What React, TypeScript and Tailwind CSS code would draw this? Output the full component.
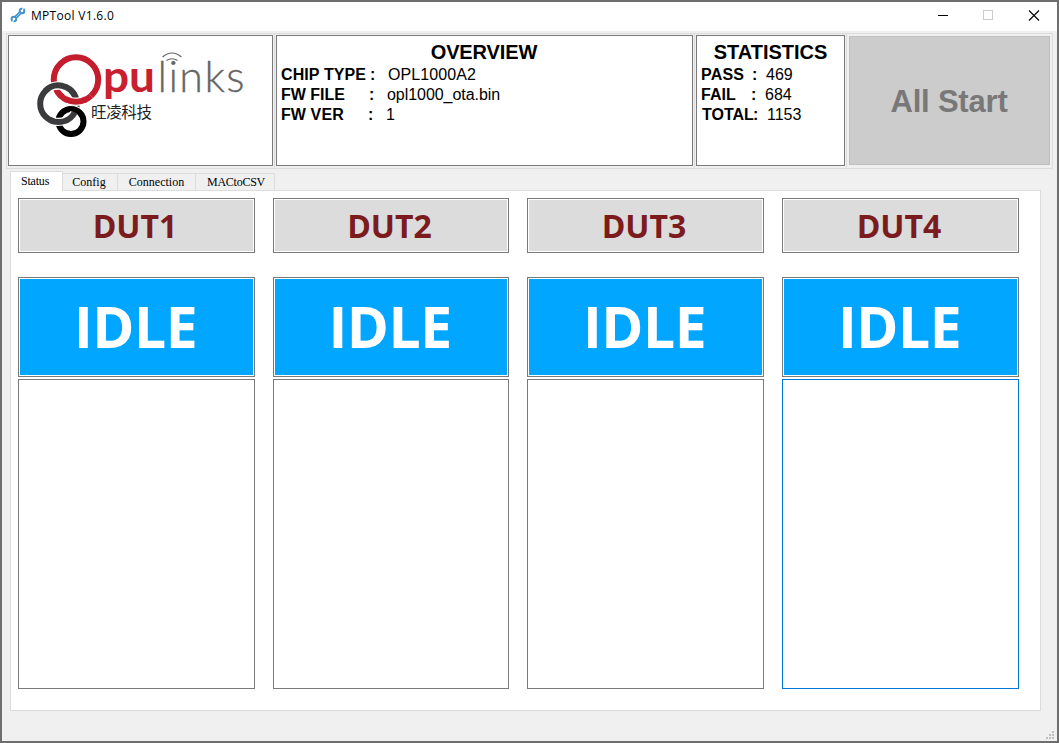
import React from "react";

type Row = { label: string; colon: string; value: string; labelClass: string; colonClass: string; valueClass: string };

const overview: Row[] = [
  { label: "CHIP TYPE", colon: ":", value: "OPL1000A2", labelClass: "w-[89px] tracking-[0.1px]", colonClass: "w-[18px]", valueClass: "tracking-[0.1px]" },
  { label: "FW FILE", colon: ":", value: "opl1000_ota.bin", labelClass: "w-[88px]", colonClass: "w-[18px]", valueClass: "tracking-[-0.05px]" },
  { label: "FW VER", colon: ":", value: "1", labelClass: "w-[87px] tracking-[0.1px]", colonClass: "w-[18px]", valueClass: "" },
];

const statistics: Row[] = [
  { label: "PASS", colon: ":", value: "469", labelClass: "w-[51px] tracking-[0.2px]", colonClass: "w-[14px]", valueClass: "" },
  { label: "FAIL", colon: ":", value: "684", labelClass: "w-[50px]", colonClass: "w-[14px]", valueClass: "" },
  { label: "TOTAL", colon: ":", value: "1153", labelClass: "pl-px w-[52px]", colonClass: "w-[14px]", valueClass: "" },
];

const tabs = [
  { name: "Config", className: "w-[55px] pr-[2px]" },
  { name: "Connection", className: "w-[78px]" },
  { name: "MACtoCSV", className: "w-[79px] tracking-[-0.25px] pl-[2px]" },
];

const units = ["DUT1", "DUT2", "DUT3", "DUT4"];

function Logo() {
  return (
    <svg width="263" height="129" viewBox="9 36 263 129" className="block">
      <circle cx="76" cy="79.500" r="22.200" fill="none" stroke="#c41e2e" strokeWidth="6" />
      <circle cx="58.500" cy="103.700" r="18.300" fill="none" stroke="#fff" strokeWidth="8.400" />
      <circle cx="58.500" cy="103.700" r="18.300" fill="none" stroke="#3b3b3d" strokeWidth="6" />
      <path d="M62 96.800A22.200 22.200 0 0 0 91 95.900" fill="none" stroke="#fff" strokeWidth="8" />
      <path d="M57.200 91.300A22.200 22.200 0 0 0 91 95.900" fill="none" stroke="#c41e2e" strokeWidth="6" />
      <path d="M49 88A18.300 18.300 0 0 1 71 90.400" fill="none" stroke="#fff" strokeWidth="8" />
      <path d="M45 91.300A18.300 18.300 0 0 1 75.500 97" fill="none" stroke="#3b3b3d" strokeWidth="6" />
      <path d="M68 100.200A22.200 22.200 0 0 0 84 100.200" fill="none" stroke="#fff" strokeWidth="8" />
      <path d="M66 99.300A22.200 22.200 0 0 0 86 99.300" fill="none" stroke="#c41e2e" strokeWidth="6" />
      <circle cx="71" cy="121.500" r="12.500" fill="none" stroke="#fff" strokeWidth="8" />
      <circle cx="71" cy="121.500" r="12.500" fill="none" stroke="#000" strokeWidth="6" />
      <path d="M54 121.400A18.300 18.300 0 0 0 74.200 113" fill="none" stroke="#fff" strokeWidth="8.200" />
      <path d="M50 119.900A18.300 18.300 0 0 0 74.800 112.300" fill="none" stroke="#3b3b3d" strokeWidth="6" />
      <text x="103" y="92" textLength="52" lengthAdjust="spacingAndGlyphs" fill="#c9202f" className="font-['Lato',sans-serif] text-[43px] font-bold">pu</text>
      <text x="157.500" y="92" textLength="87" lengthAdjust="spacing" fill="#666" stroke="#666" strokeWidth="0.300" className="font-['Lato',sans-serif] text-[43px] font-light">links</text>
      <path d="M162.500 57Q172 49 181.500 57M166.500 60.500Q172 57 177.500 60.500" fill="none" stroke="#666" strokeWidth="1.200" />
      <text x="91" y="118" textLength="61" fill="#222" className="font-['Noto_Sans_CJK_SC',sans-serif] text-[15.500px]">旺凌科技</text>
    </svg>
  );
}

function Info({ title, rows, titleClass }: { title: string; rows: Row[]; titleClass: string }) {
  return (
    <div className="h-[131px] border border-[#7a7a7a] bg-white pt-[4px] pl-[4px]">
      <h2 className={`h-[25px] text-center text-[20px] leading-6 font-bold ${titleClass}`}>{title}</h2>
      {rows.map((r) => (
        <div key={r.label} className="flex h-5 text-[16px] leading-5 whitespace-pre">
          <b className={r.labelClass}>{r.label}</b>
          <b className={r.colonClass}>{r.colon}</b>
          <span className={r.valueClass}>{r.value}</span>
        </div>
      ))}
    </div>
  );
}

export default function App() {
  return (
    <div className="flex h-[743px] w-[1059px] flex-col border-2 border-[#6e6e6e] bg-[#f0f0f0] font-['Liberation_Sans',Arial,sans-serif] text-black">
      <header className="flex h-[29px] shrink-0 items-center bg-white pl-[8px]">
        <svg width="16" height="16" viewBox="0 0 16 16" className="-mt-[3px]">
          <path d="M5.500 10.500L10.500 5.500" stroke="#3e91cc" strokeWidth="3.400" />
          <circle cx="3.900" cy="12" r="2.300" fill="none" stroke="#3e91cc" strokeWidth="1.900" />
          <circle cx="12" cy="4" r="2.300" fill="none" stroke="#3e91cc" strokeWidth="1.900" />
          <path d="M3.900 12L2.500 15.500M12 4L13.500 .5" stroke="#fff" strokeWidth="1.100" />
          <path d="M6 10L10 6" stroke="#8fd0f3" strokeWidth="1" />
        </svg>
        <span className="ml-[5px] -mt-[2px] grow font-['Open_Sans',sans-serif] text-[12px] tracking-[0.3px]">MPTool V1.6.0</span>
        <svg width="120" height="29" viewBox="937 2 120 29" shapeRendering="crispEdges" fill="none">
          <path d="M938 15.500H948" stroke="#000" />
          <rect x="983.500" y="10.500" width="9" height="9" stroke="#ccc" />
          <path d="M1029 10.500L1039 20.500M1039 10.500L1029 20.500" stroke="#000" shapeRendering="auto" strokeWidth="1.100" />
        </svg>
      </header>

      <section className="mt-[2px] ml-[4px] grid h-[136px] w-[1047px] shrink-0 grid-cols-[268px_420px_152px_205px] border border-[#dcdcdc]">
        <div className="border-r border-[#dcdcdc] pt-px pr-px pl-px">
          <div className="h-[131px] border border-[#7a7a7a] bg-white"><Logo /></div>
        </div>
        <div className="border-r border-[#dcdcdc] pt-px pr-px pl-px">
          <Info title="OVERVIEW" rows={overview} titleClass="tracking-[-0.1px] pr-[5px]" />
        </div>
        <div className="border-r border-[#dcdcdc] pt-px pr-px pl-px">
          <Info title="STATISTICS" rows={statistics} titleClass="pr-[4px]" />
        </div>
        <div className="pt-[2px] pl-[2px]">
          <button className="h-[129px] w-[201px] border border-[#bfbfbf] bg-[#ccc] pt-[4px] pr-px text-[31px] font-bold tracking-[-0.2px] text-[#787878]">All Start</button>
        </div>
      </section>

      <nav className="mt-[2px] ml-[8px] flex h-[19px] shrink-0 items-end font-['Liberation_Serif',serif] text-[12px]">
        <div className="relative -mb-px h-5 w-[53px] border border-b-0 border-[#dcdcdc] bg-white pl-[10px] leading-[19px] tracking-[-0.2px]">Status</div>
        {tabs.map((t) => (
          <div key={t.name} className={`h-[17px] border-t border-r border-[#dcdcdc] text-center leading-[17px] ${t.className}`}>{t.name}</div>
        ))}
      </nav>

      <main className="ml-[8px] grid h-[521px] w-[1031px] shrink-0 grid-cols-[237px_236px_237px_237px] gap-x-[18px] border border-[#dcdcdc] bg-white pt-[7px] pl-[7px]">
        {units.map((u, i) => (
          <section key={u} className="flex flex-col font-['Open_Sans',sans-serif] font-bold">
            <div className="h-[55px] border border-[#7a7a7a] p-px">
              <div className="flex h-full items-center justify-center bg-[#dcdcdc] pr-[3px] text-[32px] text-[#7b1b1e]">{u}</div>
            </div>
            <div className="mt-6 h-[100px] border border-[#7a7a7a] p-px">
              <div className="flex h-full items-center justify-center bg-[#00a6ff] pr-[2px] text-[57px] tracking-[-0.5px] text-white">IDLE</div>
            </div>
            <div className={`mt-[2px] h-[310px] border ${i === 3 ? "border-[#0078d7]" : "border-[#7a7a7a]"}`} />
          </section>
        ))}
      </main>

      <footer className="flex grow items-end justify-end pr-[3px] pb-[2px]">
        <svg width="8" height="8" fill="#bfbfbf" shapeRendering="crispEdges">
          <path d="M6 0h2v2h-2zM3 3h2v2h-2zM6 3h2v2h-2zM0 6h2v2h-2zM3 6h2v2h-2zM6 6h2v2h-2z" />
        </svg>
      </footer>
    </div>
  );
}
